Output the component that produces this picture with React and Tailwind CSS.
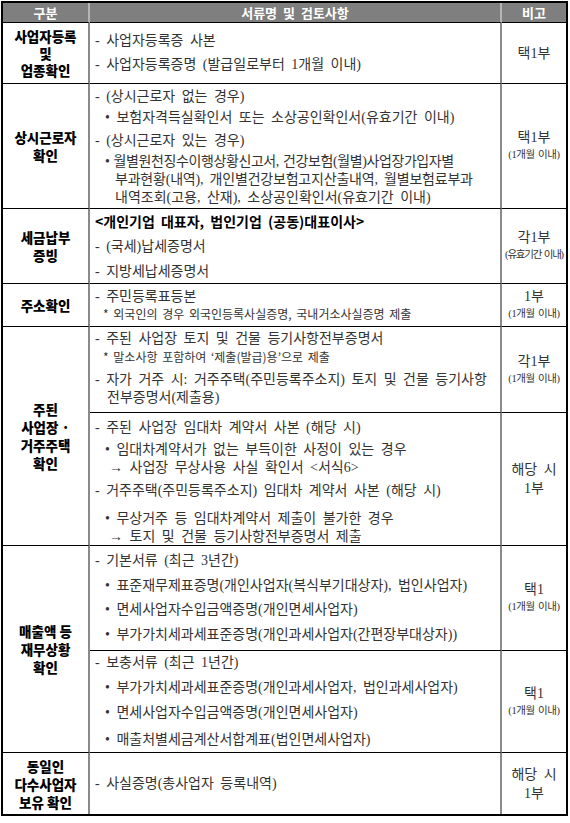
const body = "font-['Liberation_Serif','Noto_Sans_CJK_KR',serif] text-[14px] text-[#333] [word-spacing:3px] whitespace-nowrap";
const gothic = "font-['Noto_Sans_CJK_KR','Noto_Sans',sans-serif]";
const c1 = `flex flex-col items-center justify-center text-center border-r-2 border-b border-r-[#8a8a8a] border-b-black ${gothic} font-black text-[13.5px] text-black`;
const c2 = `border-r-2 border-b border-r-[#8a8a8a] border-b-black pl-[5px] ${body}`;
const c3 = `flex flex-col items-center justify-center text-center border-b border-black ${body} text-[14.5px]`;

function Note({ children }) {
  return <span className="block text-[10.5px] leading-[16px] tracking-[-0.4px] [word-spacing:1px]">{children}</span>;
}

function Small({ className = "", children }) {
  return (
    <div className={`pl-[8px] text-[12px] leading-[16px] text-[#333] ${gothic} [word-spacing:2px] ${className}`}>
      * {children}
    </div>
  );
}

function D({ className = "", children }) {
  return <div className={`leading-[18px] ${className}`}>- {children}</div>;
}

function B({ className = "", children }) {
  return <div className={`pl-[10px] leading-[18px] ${className}`}>• {children}</div>;
}

function A({ className = "", children }) {
  return <div className={`pl-[14px] leading-[17px] ${className}`}>→ {children}</div>;
}

export default function App() {
  return (
    <div className="w-[570px] h-[823px] bg-white pt-px pl-px">
      <div className="w-[567px] border-2 border-black grid grid-cols-[87px_412px_1fr] grid-rows-[20px_61px_125px_75px_43px_86px_133px_105px_102px_61px]">
        {/* header */}
        <div className={`flex items-center justify-center bg-[#7f7f7f] border-r-2 border-r-[#b5b5b5] border-b border-b-black text-white text-[13px] font-bold ${gothic}`}>구분</div>
        <div className={`flex items-center justify-center bg-[#7f7f7f] border-r-2 border-r-[#b5b5b5] border-b border-b-black text-white text-[13px] font-bold ${gothic} [word-spacing:3px]`}>서류명 및 검토사항</div>
        <div className={`flex items-center justify-center bg-[#7f7f7f] border-b border-b-black text-white text-[13px] font-bold ${gothic}`}>비고</div>

        {/* 사업자등록 */}
        <div className={`${c1} leading-[17px]`}>
          <span>사업자등록</span>
          <span>및</span>
          <span>업종확인</span>
        </div>
        <div className={`${c2} pt-[9px]`}>
          <D>사업자등록증 사본</D>
          <D className="mt-[6px]">사업자등록증명 (발급일로부터 1개월 이내)</D>
        </div>
        <div className={c3}>택1부</div>

        {/* 상시근로자 */}
        <div className={`${c1} leading-[18px]`}>
          <span>상시근로자</span>
          <span>확인</span>
        </div>
        <div className={`${c2} pt-[4px]`}>
          <D>(상시근로자 없는 경우)</D>
          <B className="mt-[3px]">보험자격득실확인서 또는 소상공인확인서(유효기간 이내)</B>
          <D className="mt-[5px]">(상시근로자 있는 경우)</D>
          <B className="mt-[3px] tracking-[-0.4px] [word-spacing:1px]">월별원천징수이행상황신고서, 건강보험(월별)사업장가입자별</B>
          <div className="pl-[20px] leading-[18px] tracking-[-0.2px]">부과현황(내역), 개인별건강보험고지산출내역, 월별보험료부과</div>
          <div className="pl-[20px] leading-[18px]">내역조회(고용, 산재), 소상공인확인서(유효기간 이내)</div>
        </div>
        <div className={`${c3} leading-[18px]`}>
          <span>택1부</span>
          <Note>(1개월 이내)</Note>
        </div>

        {/* 세금납부 */}
        <div className={`${c1} leading-[18px]`}>
          <span>세금납부</span>
          <span>증빙</span>
        </div>
        <div className={`${c2} pt-[3px]`}>
          <div className={`leading-[18px] text-black font-bold ${gothic}`}>&lt;개인기업 대표자, 법인기업 (공동)대표이사&gt;</div>
          <D className="mt-[8px]">(국세)납세증명서</D>
          <D className="mt-[7px]">지방세납세증명서</D>
        </div>
        <div className={`${c3} leading-[18px]`}>
          <span>각1부</span>
          <Note><span className="tracking-[-1.2px]">(유효기간 이내)</span></Note>
        </div>

        {/* 주소확인 */}
        <div className={c1}>주소확인</div>
        <div className={`${c2} pt-[4px]`}>
          <D>주민등록표등본</D>
          <Small>외국인의 경우 외국인등록사실증명, 국내거소사실증명 제출</Small>
        </div>
        <div className={`${c3} leading-[18px]`}>
          <span>1부</span>
          <Note>(1개월 이내)</Note>
        </div>

        {/* 주된 사업장 */}
        <div className={`${c1} row-span-2 leading-[18px]`}>
          <span>주된</span>
          <span>사업장 ·</span>
          <span>거주주택</span>
          <span>확인</span>
        </div>
        <div className={`${c2} pt-[3px]`}>
          <D>주된 사업장 토지 및 건물 등기사항전부증명서</D>
          <Small className="mt-px">말소사항 포함하여 ‘제출(발급)용’으로 제출</Small>
          <D className="mt-[6px] [word-spacing:3px]">자가 거주 시: 거주주택(주민등록주소지) 토지 및 건물 등기사항</D>
          <div className="pl-[12px] leading-[18px]">전부증명서(제출용)</div>
        </div>
        <div className={`${c3} leading-[18px]`}>
          <span>각1부</span>
          <Note>(1개월 이내)</Note>
        </div>
        <div className={`${c2} pt-[6px]`}>
          <D className="leading-[17px]">주된 사업장 임대차 계약서 사본 (해당 시)</D>
          <B className="mt-[4px] leading-[17px]">임대차계약서가 없는 부득이한 사정이 있는 경우</B>
          <A>사업장 무상사용 사실 확인서 &lt;서식6&gt;</A>
          <D className="mt-[6px] leading-[17px]">거주주택(주민등록주소지) 임대차 계약서 사본 (해당 시)</D>
          <B className="mt-[10px] leading-[17px]">무상거주 등 임대차계약서 제출이 불가한 경우</B>
          <A>토지 및 건물 등기사항전부증명서 제출</A>
        </div>
        <div className={`${c3} leading-[19px]`}>
          <span>해당 시</span>
          <span>1부</span>
        </div>

        {/* 매출액 */}
        <div className={`${c1} row-span-2 leading-[18px]`}>
          <span>매출액 등</span>
          <span>재무상황</span>
          <span>확인</span>
        </div>
        <div className={`${c2} pt-[6px]`}>
          <D>기본서류 (최근 3년간)</D>
          <B className="mt-[7px]">표준재무제표증명(개인사업자(복식부기대상자), 법인사업자)</B>
          <B className="mt-[6px]">면세사업자수입금액증명(개인면세사업자)</B>
          <B className="mt-[7px]">부가가치세과세표준증명(개인과세사업자(간편장부대상자))</B>
        </div>
        <div className={`${c3} leading-[18px]`}>
          <span>택1</span>
          <Note>(1개월 이내)</Note>
        </div>
        <div className={`${c2} pt-[3px]`}>
          <D>보충서류 (최근 1년간)</D>
          <B className="mt-[7px]">부가가치세과세표준증명(개인과세사업자, 법인과세사업자)</B>
          <B className="mt-[7px]">면세사업자수입금액증명(개인면세사업자)</B>
          <B className="mt-[9px]">매출처별세금계산서합계표(법인면세사업자)</B>
        </div>
        <div className={`${c3} leading-[18px]`}>
          <span>택1</span>
          <Note>(1개월 이내)</Note>
        </div>

        {/* 동일인 */}
        <div className={`${c1} border-b-0 leading-[18px]`}>
          <span>동일인</span>
          <span>다수사업자</span>
          <span>보유 확인</span>
        </div>
        <div className={`${c2} border-b-0 flex items-center`}>
          <D>사실증명(총사업자 등록내역)</D>
        </div>
        <div className={`${c3} border-b-0 leading-[19px]`}>
          <span>해당 시</span>
          <span>1부</span>
        </div>
      </div>
    </div>
  );
}
